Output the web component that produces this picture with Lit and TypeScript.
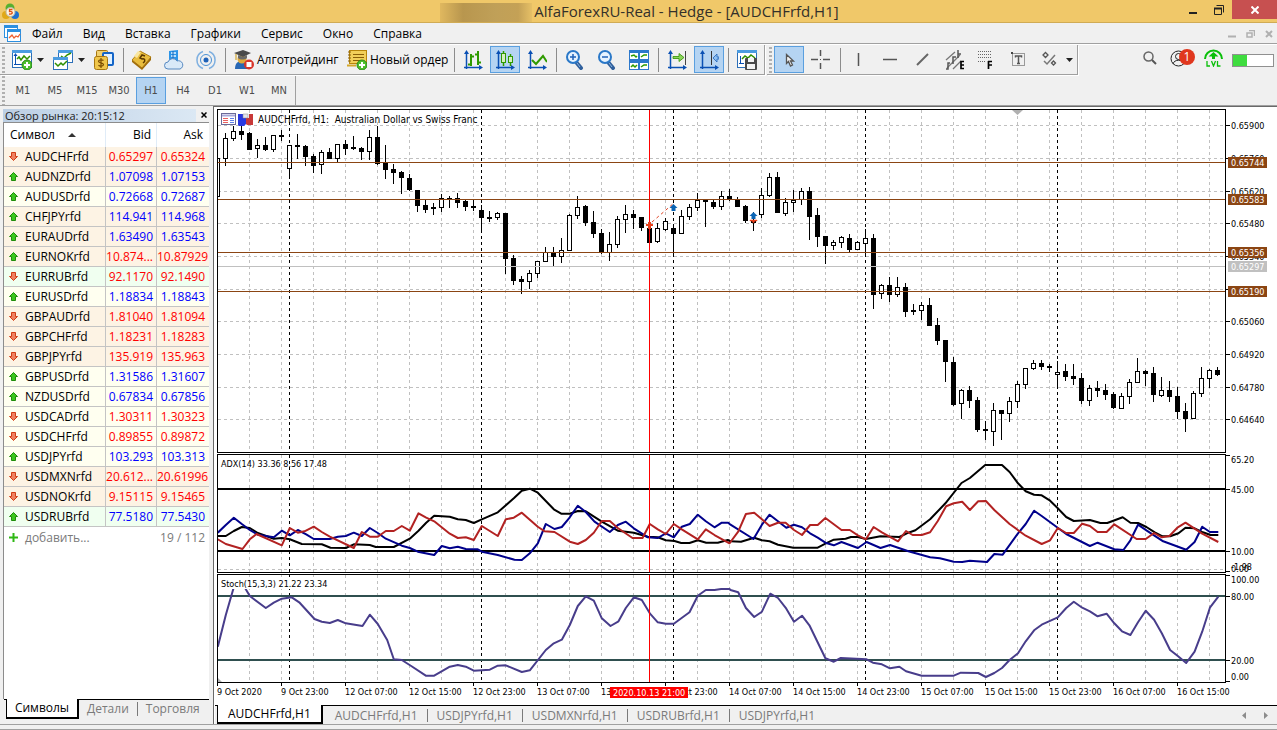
import { LitElement, html, svg, css } from "lit";
import { customElement, property } from "lit/decorators.js";
import { classMap } from "lit/directives/class-map.js";

type Candle = [number, number, number, number, number];

// Hourly candles: high, body top, body bottom, low, falling (1) or rising (0).
const CANDLES: Candle[] = [
  [158,158,196,196,0],[133,138,158,165,0],[126,131,138,140,0],[126,131,134,139,1],[132,133,149,149,1],
  [139,145,148,157,0],[137,145,149,150,1],[135,135,149,151,0],[130,135,136,140,1],[145,145,168,176,0],
  [134,145,146,158,1],[145,146,156,165,1],[154,156,165,172,1],[150,152,164,173,0],[148,152,158,158,1],
  [144,144,158,161,0],[140,144,148,154,1],[136,147,148,149,1],[147,148,151,159,1],[130,137,151,159,0],
  [126,137,163,164,1],[145,163,169,178,1],[164,169,172,183,1],[171,172,177,193,1],[174,178,189,190,1],
  [190,190,205,211,1],[200,205,209,212,1],[203,207,208,214,1],[194,198,207,211,0],[196,198,199,207,1],
  [193,198,202,207,1],[200,201,206,210,1],[199,206,207,210,1],[205,210,217,231,1],[211,217,218,221,1],
  [212,213,217,219,0],[213,213,258,273,1],[255,258,280,284,1],[276,279,281,293,1],[270,273,281,288,0],
  [261,261,273,277,0],[247,252,261,261,0],[247,252,256,266,1],[238,250,256,262,0],[214,215,250,250,0],
  [196,207,215,218,0],[205,206,222,225,1],[211,222,233,237,1],[229,233,252,253,1],[232,244,252,260,0],
  [216,219,244,247,0],[205,214,219,232,0],[210,214,217,228,1],[217,217,227,230,1],[226,228,242,242,1],
  [223,228,241,242,0],[218,221,229,230,0],[224,228,233,255,1],[210,216,233,233,0],[204,207,216,219,0],
  [193,200,207,210,0],[199,200,201,226,1],[200,202,206,208,1],[191,196,206,209,0],[189,196,199,200,1],
  [197,199,206,206,1],[205,206,220,222,1],[212,220,222,230,1],[188,195,214,217,0],[173,177,195,196,0],
  [172,177,212,212,1],[198,202,213,215,0],[190,200,202,211,0],[188,191,199,204,0],[187,191,216,239,1],
  [208,215,236,246,1],[236,236,245,263,1],[240,242,245,249,0],[236,237,242,247,0],[234,238,249,251,1],
  [241,242,249,249,0],[229,238,243,255,0],[234,238,294,308,1],[284,285,293,298,0],[277,285,294,301,1],
  [277,287,294,296,0],[283,287,311,316,1],[304,310,311,314,1],[302,305,310,319,0],[298,305,325,325,1],
  [318,325,340,344,1],[340,340,361,381,1],[357,362,404,405,1],[389,390,403,418,0],[386,390,400,407,1],
  [397,400,429,431,1],[421,429,430,439,1],[403,410,431,445,0],[410,410,413,439,1],[397,401,413,421,0],
  [381,384,401,407,0],[368,368,384,388,0],[360,363,368,369,0],[360,363,366,369,1],[364,366,367,371,1],
  [361,372,374,388,0],[364,371,376,380,1],[364,376,378,384,1],[373,378,400,403,1],[385,388,400,405,0],
  [381,388,390,396,1],[384,390,394,399,1],[392,394,407,408,1],[393,396,408,408,0],[379,382,396,403,0],
  [358,371,382,382,0],[370,371,373,385,1],[367,373,394,401,1],[377,390,395,396,0],[381,390,396,401,1],
  [387,396,411,418,1],[403,411,418,431,1],[391,393,418,418,0],[367,378,393,396,0],[369,370,378,387,0],
  [367,370,374,375,1],
];

// Indicator traces come in two halves; each half has its own origin and horizontal density.
const trace = (left: string, right: string): string => {
  const half = (s: string, origin: number, density: number) =>
    s.trim().split(/\s+/).map((p) => {
      const [x, y] = p.split(",").map(Number);
      return `${(origin + x / density).toFixed(1)},${(450 + y / 3).toFixed(1)}`;
    }).join(" ");
  return half(left, 214.5, 3) + " " + half(right, 730.5, 2.866);
};

const ADX = trace(
  "10,258 34,258 58,243 82,231 106,234 130,249 178,266 202,264 226,268 262,282 322,283 348,293 394,294 418,283 466,285 484,291 538,291 586,266 612,242 635,218 659,197 706,200 730,208 754,210 778,219 802,208 850,187 898,145 922,122 946,116 970,128 1018,178 1040,191 1066,191 1090,183 1114,184 1162,215 1210,242 1258,248 1300,260 1330,262 1354,271 1380,273 1400,279 1425,279 1450,271 1475,278 1510,278 1540,270",
  "0,274 30,275 68,263 90,271 112,274 136,284 180,293 250,293 272,281 296,269 330,266 345,261 365,261 388,267 430,259 484,261 510,248 530,241 572,208 616,160 662,99 686,84 730,45 778,45 800,66 824,100 846,124 870,134 892,136 916,152 938,175 962,201 984,213 1030,210 1060,219 1080,219 1124,202 1146,218 1168,219 1192,231 1216,247 1238,259 1260,259 1284,250 1304,233 1330,235 1354,247 1376,255 1398,255");
const DI_PLUS = trace(
  "10,248 34,225 58,203 82,222 106,240 130,254 178,262 202,242 226,256 250,240 275,253 298,267 346,267 370,260 394,258 418,248 442,258 466,234 490,249 514,266 562,287 586,294 610,305 659,315 682,288 706,295 730,290 754,297 790,298 802,305 850,315 900,329 922,330 946,310 970,280 994,222 1020,237 1042,231 1066,202 1090,167 1114,186 1140,215 1186,246 1210,225 1234,215 1258,235 1300,262 1330,264 1354,250 1378,262 1402,230 1426,222 1450,194 1474,214 1500,232 1522,218 1541,218",
  "0,224 66,267 90,224 112,194 160,233 182,224 205,232 228,250 250,263 272,278 296,286 318,276 365,294 390,276 430,294 457,285 510,304 572,322 600,325 640,335 664,336 686,332 735,336 756,312 780,314 824,250 846,222 870,182 892,198 962,252 1030,288 1052,278 1100,298 1126,300 1146,271 1168,224 1192,241 1240,274 1306,299 1330,276 1352,230 1374,246 1398,246");
const DI_MINUS = trace(
  "10,268 34,282 84,297 106,268 126,252 202,286 226,234 250,248 270,244 298,230 322,246 346,260 418,294 442,246 466,260 490,260 514,243 538,243 562,228 586,242 612,190 635,203 659,214 706,251 730,264 754,262 778,270 802,228 850,258 874,208 898,203 922,188 970,230 990,244 1020,246 1066,275 1090,282 1114,270 1138,248 1162,213 1186,213 1210,234 1254,264 1284,264 1306,222 1330,238 1354,252 1378,222 1402,238 1450,268 1474,238 1500,255 1545,280",
  "0,276 22,245 44,192 68,188 90,208 112,228 136,218 158,218 182,240 205,255 228,225 250,225 272,204 318,240 342,240 365,256 388,268 410,231 434,247 480,274 503,243 522,255 548,255 572,247 594,213 618,169 640,160 664,155 686,180 710,154 732,153 756,180 800,222 846,257 892,282 916,271 938,234 962,249 984,249 1008,221 1030,228 1052,246 1078,246 1100,223 1164,267 1190,267 1214,249 1236,262 1258,258 1282,232 1304,218 1352,251 1398,276");
const STOCH = trace(
  "10,590 34,495 58,412 66,390 84,402 92,415 106,438 154,474 178,458 202,446 232,442 254,457 300,507 322,515 346,519 370,510 394,520 444,528 466,494 490,522 518,570 538,628 562,630 590,648 634,677 659,677 706,650 730,645 754,650 778,662 826,659 850,647 874,646 922,666 946,661 994,600 1018,580 1042,569 1066,525 1090,468 1114,439 1138,452 1162,505 1188,528 1212,514 1234,474 1258,442 1282,450 1306,490 1330,517 1354,521 1378,521 1425,487 1450,437 1474,420 1500,420 1520,417 1545,417",
  "0,420 22,427 44,474 68,501 90,485 114,431 136,444 160,476 182,515 205,497 226,526 272,625 296,635 316,624 390,628 408,638 434,643 457,655 484,650 503,664 548,677 640,677 660,668 710,669 732,681 756,669 778,654 800,630 824,610 846,574 870,541 892,524 938,502 962,474 984,455 1008,473 1030,484 1052,499 1078,491 1100,520 1122,544 1146,555 1168,517 1190,482 1214,509 1236,550 1260,600 1282,618 1306,639 1330,605 1352,545 1374,473 1398,440");

const ROWS: [string, string, string, string, string, string][] = [
  ["AUDCHFrfd", "0.65297", "0.65324", "down", "red", "peach"],
  ["AUDNZDrfd", "1.07098", "1.07153", "up", "blue", "peach"],
  ["AUDUSDrfd", "0.72668", "0.72687", "up", "blue", "ivory"],
  ["CHFJPYrfd", "114.941", "114.968", "up", "blue", "peach"],
  ["EURAUDrfd", "1.63490", "1.63543", "up", "blue", "peach"],
  ["EURNOKrfd", "10.874...", "10.87929", "up", "red", "peach"],
  ["EURRUBrfd", "92.1170", "92.1490", "down", "red", "mint"],
  ["EURUSDrfd", "1.18834", "1.18843", "up", "blue", "ivory"],
  ["GBPAUDrfd", "1.81040", "1.81094", "down", "red", "peach"],
  ["GBPCHFrfd", "1.18231", "1.18283", "down", "red", "peach"],
  ["GBPJPYrfd", "135.919", "135.963", "down", "red", "peach"],
  ["GBPUSDrfd", "1.31586", "1.31607", "up", "blue", "ivory"],
  ["NZDUSDrfd", "0.67834", "0.67856", "up", "blue", "ivory"],
  ["USDCADrfd", "1.30311", "1.30323", "down", "red", "ivory"],
  ["USDCHFrfd", "0.89855", "0.89872", "down", "red", "ivory"],
  ["USDJPYrfd", "103.293", "103.313", "up", "blue", "ivory"],
  ["USDMXNrfd", "20.612...", "20.61996", "down", "red", "peach"],
  ["USDNOKrfd", "9.15115", "9.15465", "down", "red", "peach"],
  ["USDRUBrfd", "77.5180", "77.5430", "up", "blue", "mint"],
];

const axes = svg`<path d="M3.5 2v17M1 17.5h17" stroke="#0a50b4" stroke-width="1.5" fill="none"/><path d="M3.5 0l2.500 4h-5zM20 17.500l-4 2.500v-5z" fill="#0a50b4"/>`;
const miniWindow = (x: number, y: number, w: number, h: number) => svg`
  <rect x=${x + 0.5} y=${y + 0.5} width=${w - 1} height=${h - 1} fill="#fff" stroke="#2c6fb8"/>
  <rect x=${x} y=${y} width=${w} height="3" fill="#4a9be0"/>`;
const plusDisc = svg`<circle cx="15" cy="15" r="5" fill="#4cbf2c" stroke="#2b8a17"/><path d="M15 12v6M12 15h6" stroke="#fff" stroke-width="2"/>`;
const lens = svg`<path d="M11 12l5 6" stroke="#2f5f9c" stroke-width="4" stroke-linecap="round"/><path d="M12 13l3 4" stroke="#8ab4e0" stroke-width="1"/><circle cx="8" cy="7" r="6" fill="#e6f3ff" stroke="#2a78c8" stroke-width="2"/>`;

const ICONS: Record<string, unknown> = {
  newChart: svg`${miniWindow(0, 0, 20, 18)}<path d="M3.5 15V5M2 14.5h12" stroke="#0a50b4"/><path d="M5 9l2-2 2 3 3-4 3 3 3-3" stroke="#2f8f00" fill="none" stroke-width="1.5"/><path d="M3.5 3l2 3h-4z" fill="#0a50b4"/>${plusDisc}`,
  windows: svg`${miniWindow(5, 0, 15, 13)}<path d="M8 6l3 2 3-3 4-2" stroke="#2f8f00" fill="none" stroke-width="1.5"/>${miniWindow(0, 7, 15, 13)}<path d="M2 13l3 3 3-3 2 2 4-4" stroke="#2f8f00" fill="none" stroke-width="1.5"/>`,
  money: svg`<rect x="2.5" y=".5" width="11" height="10" rx="1" fill="#f0d070" stroke="#a87710"/><rect x="9" y="3" width="10" height="12" rx="1" fill="#dff0ff" stroke="#1465c8" stroke-width="2"/><rect x=".5" y="6.5" width="13" height="13" rx="2" fill="#f0c64a" stroke="#a87710"/><path d="M9.500 10.500c-1-1-5-1-5 .8s5 1.200 5 3.200-4 2-5 .6M7 8v10" stroke="#7a4c00" stroke-width="1.200" fill="none"/>`,
  gold: svg`<path d="M8 1l11 6-9 11L0 10z" fill="#e9bd3e" stroke="#b07f14"/><path d="M0 10l10 8v2L0 12zM19 7v3l-9 10v-2z" fill="#a06c08"/><path d="M2 6l4-5 3 1-4 6z" fill="#f9e6a0"/><path d="M13 6l-3-1-2 3 2 1c3-1 4 2 1 4" stroke="#5a3800" stroke-width="1.500" fill="none"/>`,
  cloud: svg`<path d="M5 1l9-1v12H5z" fill="#2d95e8"/><path d="M7 3h5M7 6h5" stroke="#e6f6ff" stroke-width="1.500"/><path d="M9 1v10" stroke="#1465b8"/><path d="M4 19a3.500 3.500 0 0 1 0-7 5 5 0 0 1 9-1 4 4 0 0 1 3 8z" fill="#d9e9f8" stroke="#5688c0"/>`,
  signal: svg`<g fill="none" stroke="#4a90d4"><circle cx="10" cy="10" r="5.500"/><path d="M7 1.500a9 9 0 0 0 0 17M13 1.500a9 9 0 0 1 0 17" stroke="#7fb0e0" stroke-width="1.500"/></g><circle cx="10" cy="10" r="2.500" fill="#1f62b8"/>`,
  algo: svg`<path d="M1 19c0-6 3-8 7-8s7 3 7 8z" fill="#2a68b4"/><circle cx="8" cy="9" r="4.500" fill="#e0a93a"/><path d="M0 3l9-3 8 3-8 4z" fill="#4a4a4a"/><path d="M4 5v3c2 2 7 2 9 0V5L9 7z" fill="#6a6a6a"/><path d="M2 4v6" stroke="#c8960a"/><circle cx="15" cy="14.500" r="5" fill="#d8352a"/><rect x="12.500" y="12" width="5" height="5" fill="#fff"/>`,
  order: svg`<rect x="2.500" y=".5" width="17" height="13" fill="#f2cf5a" stroke="#b8860b"/><path d="M6 4.500h11M6 7.500h11M6 10.500h7" stroke="#8a5f08"/><path d="M1 2h3M1 5h3M1 8h3M1 11h3" stroke="#8a5f08"/><path d="M0 15.500h9" stroke="#d5a82c" stroke-width="2"/>${plusDisc}`,
  bars: svg`${axes}<path d="M8 4v12M5 14.500h3M8 6.500h3M15 1v14M12 4.500h3M15 12.500h3" stroke="#2f9a00" stroke-width="2" fill="none"/>`,
  candles: svg`${axes}<path d="M8.500 1v3M8.500 13v3M15.500 4v2M15.500 13v3" stroke="#2f9a00" stroke-width="1.500"/><rect x="6.500" y="3.500" width="4" height="9" fill="#d6efc0" stroke="#2f9a00"/><rect x="13.500" y="6.500" width="4" height="6" fill="#d6efc0" stroke="#2f9a00"/>`,
  line: svg`${axes}<path d="M5 10l4 4 7-8 4 6" stroke="#2f9a00" stroke-width="2" fill="none"/>`,
  zoomIn: svg`${lens}<path d="M5 7h6M8 4v6" stroke="#1f62b8" stroke-width="1.500"/>`,
  zoomOut: svg`${lens}<path d="M5 7h6" stroke="#1f62b8" stroke-width="1.500"/>`,
  tiles: svg`<rect width="20" height="20" fill="#2c78cc"/><path d="M1 3h8v6H1zM11 3h8v6h-8zM1 13h8v6H1zM11 13h8v6h-8z" fill="#fff"/><path d="M2 6l3-1 2 2 1-1M12 7l3-2h3M2 17l2-2 2 2 2-2M12 17l3-2h3" stroke="#2f9a00" stroke-width="1.500" fill="none"/>`,
  scroll: svg`${axes}<path d="M18.500 1v14" stroke="#444"/><path d="M6 6.500h6V3.500L17 7.500 12 11.500V8.500H6z" fill="#8cd65c" stroke="#2f8f00" stroke-width=".8"/>`,
  shift: svg`${axes}<path d="M12.500 1v14" stroke="#333"/><path d="M20 7h-2V4l-4 4 4 4V9h2z" fill="#8cc0f4" stroke="#1f62b8" stroke-width=".8"/>`,
  template: svg`${miniWindow(0, 0, 20, 18)}<path d="M3.500 14V6M2 13.500h5" stroke="#0a50b4"/><path d="M5 9l3-3 3 2 3-3 4 3" stroke="#2f8f00" fill="none" stroke-width="1.500"/><rect x="8" y="8" width="12" height="12" rx="1" fill="#4a4a4a"/><path d="M11 8h6v4h-6zM10 14h8v5h-8z" fill="#f4f4f4"/>`,
  cursor: svg`<path d="M7.500 4.500v9l2-2 2 4.500 2-1-2-4h3z" fill="#f4f4f4" stroke="#555" stroke-width="1.300"/>`,
  cross: svg`<path d="M0 9.500h7M12 9.500h7M9.500 0v6M9.500 13v6" stroke="#555" stroke-width="1.500"/><path d="M9 9.500h1" stroke="#555"/>`,
  vline: svg`<path d="M9.500 3v13" stroke="#555" stroke-width="1.500"/>`,
  hline: svg`<path d="M2 9.500h14" stroke="#555" stroke-width="1.500"/>`,
  trend: svg`<path d="M4 15L15 4" stroke="#666" stroke-width="2"/>`,
  channel: svg`<path d="M1 10L10 2M2 18l13-13M8 19l8-8" stroke="#777" stroke-width="1.300"/><path d="M1 19h2v-6h2M8 14V7h3M13 8V0M13 4h3" stroke="#555" fill="none" stroke-width="1.500"/><path d="M19 11.500h-3v7h3M16 15h3" stroke="#000" stroke-width="1.700" fill="none"/>`,
  fibo: svg`<path d="M1 1.500h14M1 4.500h14M1 7.500h14M1 11.500h7" stroke="#666" stroke-dasharray="1 1"/><path d="M15 11.500h-4M11.500 11v8M12 15h3" stroke="#000" stroke-width="1.700" fill="none"/>`,
  text: svg`<rect x="3.500" y="3.500" width="12" height="12" fill="none" stroke="#444" stroke-dasharray="1 1"/><path d="M2 2h2v2H2z" fill="#444"/><path d="M6.500 7.500V6h6v1.500M9.500 6v8M8 13.500h3" stroke="#555" stroke-width="1.500" fill="none"/>`,
  shapes: svg`<path d="M4.500 2.500L7 5 4.500 7.500 2 5zM12.500 11l2 2-2 2-2-2z" fill="#eee" stroke="#555" stroke-width="1.300"/><path d="M3 11l3 3 8-9" stroke="#777" stroke-width="1.500" fill="none"/>`,
};

const icon = (name: string) => html`<svg class="icon" width="20" height="20" viewBox="0 0 20 20" aria-hidden="true">${ICONS[name]}</svg>`;
const caret = html`<svg width="7" height="4" viewBox="0 0 7 4" aria-hidden="true"><path d="M0 0h7L3.500 4z" fill="#222"/></svg>`;

@customElement("tool-bar")
class ToolBar extends LitElement {
  @property({ attribute: false }) items: string[] = [];
  static styles = css`
    :host { display: flex; align-items: stretch; height: 29px; padding-right: 2px; border-bottom: 1px solid #a0a0a0; border-right: 1px solid #a0a0a0; box-shadow: 1px 1px 0 #fff; }
    .grip { width: 3px; margin: 2px 2px 0 2px; background: repeating-linear-gradient(#b0b0b0 0 2px, #f0f0f0 2px 4px); }
    .sep { width: 8px; height: 24px; align-self: center; background: linear-gradient(90deg, transparent 4px, #8c8c8c 4px, #8c8c8c 5px, transparent 5px); }
    button { box-sizing: border-box; width: 30px; height: 27px; margin: 1px 0 0; padding: 0 0 0 4px; border: 1px solid transparent; background: none; display: flex; align-items: center; gap: 3px; font: 12px "Open Sans", "Noto Sans", sans-serif; color: #000; white-space: nowrap; }
    button + button { margin-left: 2px; }
    .drop { width: 39px; gap: 5px; }
    .wide { width: 111px; }
    .order { width: 108px; }
    .on { background: #b5d4f2; border-color: #5a9fdf; }
    .icon { flex: none; }
  `;
  render() {
    return html`<span class="grip"></span>${this.items.map((it) => {
      if (it === "|") return html`<span class="sep"></span>`;
      const [name, kind = "", label = ""] = it.split(":");
      return html`<button aria-label=${label || name} class=${classMap({ drop: kind === "drop", wide: name === "algo", order: name === "order", on: kind === "on" })}>${icon(name)}${kind === "drop" ? caret : ""}${label}</button>`;
    })}`;
  }
}

@customElement("market-watch")
class MarketWatch extends LitElement {
  static styles = css`
    :host { display: flex; flex-direction: column; min-height: 0; padding: 2px 4px 0 3px; font: 12px "Open Sans", "Noto Sans", sans-serif; }
    header { display: flex; height: 14px; align-items: center; font-size: 11px; color: #1a1a1a; }
    .name { flex: 1; padding-left: 2px; line-height: 13px; background: linear-gradient(90deg, #bccfe4, #dbe8f4); }
    .close { width: 13px; height: 14px; padding: 0 0 0 2px; border: 0; background: none; display: grid; place-items: center; }
    .body { flex: 1; display: flex; flex-direction: column; background: #fff; border-left: 1px solid #8c8c8c; border-top: 1px solid #8c8c8c; }
    table { width: 100%; border-collapse: separate; border-spacing: 0; table-layout: fixed; }
    th { height: 24px; padding: 0 5px 0 6px; font-weight: 400; text-align: right; border-right: 1px solid #e0ecf8; line-height: 22px; }
    th:first-child { text-align: left; width: 90px; }
    th:nth-child(2) { width: 39px; }
    th svg { margin: 0 0 2px 13px; }
    td { height: 19px; line-height: 19px; padding: 0 3px 0 0; text-align: right; border-right: 1px solid #c4c4c4; border-bottom: 1px solid #c4c4c4; white-space: nowrap; }
    td:first-child { text-align: left; padding-left: 5px; }
    td:last-child, th:last-child { border-right: 0; padding-right: 4px; }
    th:last-child { padding-right: 6px; }
    td svg { width: 9px; height: 9px; margin: 0 7px 0 0; vertical-align: 0; }
    .peach { background: #fdf3e4; } .ivory { background: #fffff0; } .mint { background: #f0fff0; }
    .red { color: #f00; } .blue { color: #00f; }
    .add { display: flex; align-items: center; height: 20px; padding: 0 4px 0 5px; color: #7a7a7a; }
    .add span { flex: 1; padding-left: 7px; }
    nav { display: flex; height: 25px; margin-left: 1px; color: #7a7a7a; box-shadow: inset 0 1px 0 #000; align-items: flex-start; }
    nav button { flex: none; font: inherit; color: inherit; border: 0; background: none; padding: 0 8px; margin: 3px 0 0; line-height: 14px; white-space: nowrap; }
    nav .sel { box-sizing: border-box; height: 20px; margin: 0 0 0 2px; border: 1px solid #000; border-width: 0 2px 2px 1px; background: #fff; color: #000; width: 73px; padding: 0; }
    nav .last { border-left: 1px solid #7a7a7a; }
  `;
  render() {
    return html`
      <header><span class="name">Обзор рынка: 20:15:12</span>
        <button class="close" aria-label="Закрыть"><svg width="6" height="6" viewBox="0 0 6 6"><path d="M.5.500l5 5M5.500.500l-5 5" stroke="#000" stroke-width="1.500"/></svg></button></header>
      <div class="body">
        <table>
          <thead><tr><th>Символ<svg width="8" height="4" viewBox="0 0 8 4"><path d="M0 4h8L4 0z" fill="#333"/></svg></th><th>Bid</th><th>Ask</th></tr></thead>
          <tbody>${ROWS.map(([s, bid, ask, dir, color, bg]) => html`<tr class=${bg}>
            <td><svg viewBox="0 0 9 9">${dir === "up"
              ? svg`<path d="M4.500.500l4 4h-2v4h-4v-4h-2z" fill="#3cc81e" stroke="#1e8c0a"/>`
              : svg`<path d="M4.500 8.500l4-4h-2v-4h-4v4h-2z" fill="#f08060" stroke="#d03c14"/>`}</svg>${s}</td>
            <td class=${color}>${bid}</td><td class=${color}>${ask}</td></tr>`)}</tbody>
        </table>
        <div class="add"><svg width="9" height="9" viewBox="0 0 9 9"><path d="M4.500 0v9M0 4.500h9" stroke="#2fb814" stroke-width="2"/></svg><span>добавить...</span>19 / 112</div>
      </div>
      <nav><button class="sel">Символы</button><button>Детали</button><button class="last">Торговля</button></nav>`;
  }
}

const priceGrid = [125, 158, 191, 223, 256, 289, 321, 354, 387, 419];
const priceText = ["0.65900", "0.65760", "0.65620", "0.65480", "0.65340", "0.65200", "0.65060", "0.64920", "0.64780", "0.64640"];
const marks: [number, string, string][] = [[162, "0.65744", "brown"], [199, "0.65583", "brown"], [252, "0.65356", "brown"], [266, "0.65297", "silver"], [291, "0.65190", "brown"]];
const times = ["9 Oct 2020", "9 Oct 23:00", "12 Oct 07:00", "12 Oct 15:00", "12 Oct 23:00", "13 Oct 07:00", "13 Oct 15:00", "13 Oct 23:00", "14 Oct 07:00", "14 Oct 15:00", "14 Oct 23:00", "15 Oct 07:00", "15 Oct 15:00", "15 Oct 23:00", "16 Oct 07:00", "16 Oct 15:00"];

@customElement("price-chart")
class PriceChart extends LitElement {
  static styles = css`
    :host { display: grid; grid-template-columns: minmax(0, 1fr) 51px; row-gap: 1px; background: #fff; padding: 2px 0 0 2px; font: 9px "DejaVu Sans Condensed", "DejaVu Sans", sans-serif; }
    .plot { box-sizing: border-box; width: 100%; border: 1px solid #000; display: block; overflow: hidden; }
    .scale, .axis { display: block; width: 100%; overflow: visible; }
    .price { height: 344px; } .adx { height: 119px; } .stoch { height: 109px; }
    .axis { grid-column: 1 / -1; height: 21px; margin-top: -1px; }
    .caption { font-size: 10px; }
    .grid { stroke: #c0c0c0; stroke-dasharray: 3 3; }
    .day { stroke: #000; stroke-dasharray: 3 3; }
    .brown { stroke: #8b4513; } .silver { stroke: #c0c0c0; }
    rect.brown { fill: #8b4513; stroke: none; } rect.silver { fill: #c0c0c0; stroke: none; }
    .cursor { stroke: #f00; }
    .w { fill: #fff; }
    .trace { fill: none; stroke-width: 2; stroke-linejoin: round; }
  `;
  private columns(top: number, bottom: number) {
    const out = [];
    for (let x = 249; x < 1225; x += 32) out.push(svg`<line class="grid" x1=${x + 0.5} x2=${x + 0.5} y1=${top} y2=${bottom}/>`);
    for (let x = 289; x < 1225; x += 192) out.push(svg`<line class="day" x1=${x + 0.5} x2=${x + 0.5} y1=${top} y2=${bottom}/>`);
    return out;
  }
  private row(y: number, cls: string) {
    return svg`<line class=${cls} x1="218" x2="4000" y1=${y + 0.5} y2=${y + 0.5}/>`;
  }
  private level(y: number, color: string) {
    return svg`<rect x="218" y=${y - 1} width="4000" height="2" fill=${color}/>`;
  }
  private tick(y: number, label: string) {
    return svg`<line x1="1226" x2="1230" y1=${y + 0.5} y2=${y + 0.5} stroke="#000"/><text x="1231" y=${y + 4}>${label}</text>`;
  }
  render() {
    return html`
      <svg class="plot price" role="img" aria-label="AUDCHFrfd, H1"><g transform="translate(-218 -110)">
        ${this.columns(110, 452)}
        ${priceGrid.map((y) => this.row(y, "grid"))}
        ${CANDLES.map(([h, t, b, l, down], i) => {
          const x = 217 + i * 8;
          return svg`<line x1=${x + 0.5} x2=${x + 0.5} y1=${h} y2=${l + 1} stroke="#000"/>
            <rect x=${x - 1.5} y=${t + 0.5} width="4" height=${b - t} fill=${down ? "#000" : "#fff"} stroke="#000"/>`;
        })}
        ${marks.map(([y, , c]) => this.row(y, c))}
        <path d="M652 222l22-19" stroke="#e04020" stroke-dasharray="3 3"/>
        <line class="cursor" x1="649.5" x2="649.5" y1="110" y2="452"/>
        <path d="M648 222h3v2h2v2h-2v3h-3v-3h-2v-2h2z" fill="#e8401c"/>
        <path d="M673.500 204l4 4h-2v3h-4v-3h-2zM753.500 212l4 4h-2v3h-4v-3h-2z" fill="#0a64b4"/>
        <path d="M750 220h7v1h-2l-1.500 2-1.500-2h-2z" fill="#e8401c" stroke="#e8401c" stroke-width=".5"/>
        <path d="M1012 110h11l-5.500 5z" fill="#b0b0b0"/>
        <rect x="221.500" y="113.500" width="14" height="11" fill="#fff" stroke="#6a6a98"/><path d="M222 115.500h13" stroke="#a8a8d8" stroke-width="2"/>
        <path d="M223 118.500h5M223 120.500h5M223 122.500h5" stroke="#e86060"/><path d="M230 118.500h4M230 120.500h4M230 122.500h4" stroke="#6080e8"/>
        <path d="M238 114h5v4h3v6l-2 2h-5l-1-1z" fill="#2838e0"/><path d="M253 114h-4v4h-3v6l1 1h6z" fill="#c83838"/><path d="M243 114h5v4h-5z" fill="#e4e4ec" stroke="#888" stroke-width=".5"/>
        <text class="caption" x="258" y="123" xml:space="preserve">AUDCHFrfd, H1:&#160; Australian Dollar vs Swiss Franc</text>
      </g></svg>
      <svg class="scale price"><g transform="translate(-1226 -109)">
        ${priceGrid.map((y, i) => this.tick(y, priceText[i]))}
        ${marks.map(([y, label, c]) => svg`<rect class=${c} x="1228" y=${y - 5} width="39" height="11"/><text class="w" x="1231" y=${y + 4}>${label}</text>`)}
      </g></svg>
      <svg class="plot adx" role="img" aria-label="ADX"><g transform="translate(-218 -455)">
        ${this.columns(455, 572)}
        ${this.row(569, "grid")}
        ${this.level(489, "#000")}${this.level(551, "#000")}
        <polyline class="trace" points=${ADX} stroke="#000"/>
        <polyline class="trace" points=${DI_PLUS} stroke="#00008b"/>
        <polyline class="trace" points=${DI_MINUS} stroke="#b22222"/>
        <line class="cursor" x1="649.5" x2="649.5" y1="455" y2="572"/>
        <text x="221" y="467">ADX(14) 33.36 8.56 17.48</text>
      </g></svg>
      <svg class="scale adx"><g transform="translate(-1226 -454)">
        <path d="M1226 455.500h4M1226 571.500h4" stroke="#000"/><text x="1231" y="463">65.20</text>
        ${this.tick(489, "45.00")}${this.tick(551, "10.00")}
        <text x="1231" y="572">0.00</text><text x="1231" y="570">-1.98</text>
      </g></svg>
      <svg class="plot stoch" role="img" aria-label="Stochastic"><g transform="translate(-218 -575)">
        ${this.columns(575, 682)}
        ${this.level(596, "#2f4f4f")}${this.level(660, "#2f4f4f")}
        <polyline class="trace" points=${STOCH} stroke="#483d8b"/>
        <line class="cursor" x1="649.5" x2="649.5" y1="575" y2="682"/>
        <path d="M218 678l4 4h-4z" fill="#b0b0b0"/>
        <rect x="221" y="577" width="107" height="12" fill="#fff"/>
        <text x="221" y="587">Stoch(15,3,3) 21.22 23.34</text>
      </g></svg>
      <svg class="scale stoch"><g transform="translate(-1226 -574)">
        <path d="M1226 575.500h4M1226 681.500h4" stroke="#000"/><text x="1231" y="583">100.00</text>
        ${this.tick(596, "80.00")}${this.tick(660, "20.00")}<text x="1231" y="680">0.00</text>
      </g></svg>
      <svg class="axis"><g transform="translate(-217 -683)">
        ${times.map((t, i) => svg`<line x1=${217.5 + i * 64} x2=${217.5 + i * 64} y1="683" y2="686" stroke="#000"/><text x=${217 + i * 64} y="695">${t}</text>`)}
        <rect x="610" y="687" width="78" height="11" fill="#f00"/><text class="w" x="613" y="696">2020.10.13 21:00</text>
      </g></svg>`;
  }
}

@customElement("app-root")
class AppRoot extends LitElement {
  static styles = css`
    :host { display: flex; flex-direction: column; box-sizing: border-box; min-height: 100vh; background: #f0f0f0; font: 12px "Open Sans", "Noto Sans", sans-serif; color: #000; overflow: hidden; }
    button { font: inherit; border: 0; background: none; padding: 0; margin: 0; color: inherit; white-space: nowrap; }
    .title { display: flex; height: 22px; background: #f0c869; border-bottom: 1px solid #d0ab55; align-items: center; }
    .title h1 { flex: 1; margin: 0; padding-left: 80px; display: flex; justify-content: center; align-items: center; font: 15px/22px "Open Sans", "Noto Sans", sans-serif; color: #33302a; }
    .logo { margin-left: 2px; }
    .redacted { width: 92px; height: 19px; margin: 3px 2px 0 0; background: linear-gradient(90deg, #e0b85f, #b8964e 25%, #c0a058 60%, #c4a156 85%, #e6c066); }
    .win { display: flex; align-self: flex-start; height: 19px; }
    .win button { width: 26px; display: grid; place-items: center; }
    .win .x { width: 45px; background: #c75050; }
    .menu { display: flex; height: 20px; align-items: center; padding-left: 4px; border-bottom: 1px solid #a0a0a0; box-shadow: 0 1px 0 #fff; }
    .doc { margin-right: 1px; }
    .menu button { padding: 0 10px; }
    .menu .mdi { margin-left: auto; display: flex; gap: 10px; padding-right: 4px; color: #b0b0b0; }
    .menu .mdi button { padding: 0; }
    .tools { display: flex; margin-top: 1px; gap: 2px; }
    .status { margin-left: auto; display: flex; align-items: center; gap: 9px; padding-right: 3px; }
    .status .find { margin-right: 4px; }
    .user { position: relative; }
    .badge { position: absolute; left: 9px; top: -1px; width: 16px; height: 16px; border-radius: 8px; background: #e0371e; color: #fff; text-align: center; line-height: 16px; }
    .power { box-sizing: border-box; width: 42px; height: 13px; border: 1px solid #909090; background: linear-gradient(90deg, #3fdc3f 14px, #fff 14px); }
    .frames { display: flex; align-self: flex-start; height: 29px; margin-top: 1px; padding: 0 1px 0 2px; border-right: 1px solid #a0a0a0; gap: 2px; align-items: flex-start; font: 11px "DejaVu Sans Condensed", sans-serif; color: #4c4c4c; }
    .frames .grip { width: 3px; margin-right: 1px; align-self: stretch; background: repeating-linear-gradient(#b0b0b0 0 2px, #f0f0f0 2px 4px); }
    .frames button { width: 30px; height: 27px; margin-top: 1px; box-sizing: border-box; }
    .frames .on { background: #b5d4f2; border: 1px solid #5a9fdf; }
    .main { flex: 1; display: grid; grid-template-columns: 213px minmax(0, 1fr); min-height: 0; border-top: 1px solid #a0a0a0; }
    .work { display: flex; flex-direction: column; min-width: 0; border-top: 1px solid #696969; border-left: 1px solid #696969; background: #fff; padding-left: 1px; }
    .work price-chart { flex: none; }
    .tabs { display: flex; height: 19px; margin-top: 1px; padding-left: 2px; background: #f0f0f0; box-shadow: inset 0 1px 0 #000; color: #7a7a7a; align-items: flex-start; }
    .tabs button { padding: 0 9px; line-height: 13px; border-left: 1px solid #7a7a7a; margin: 4px 0 0; }
    .tabs .sel { margin: 0 2px 0 0; height: 19px; line-height: 18px; padding: 0 10px; background: #fff; color: #000; border: solid #000; border-width: 0 2px 2px 1px; box-sizing: border-box; }
    .tabs .sel + button { border-left-color: transparent; }
    .nav { margin: 7px 9px 0 auto; }
    .foot { height: 6px; border-bottom: 1px solid #a0a0a0; border-top: 1px solid #a0a0a0; box-sizing: border-box; }
  `;
  render() {
    return html`
      <div class="title">
        <svg class="logo" width="17" height="17" viewBox="0 0 17 17" aria-hidden="true"><circle cx="8" cy="5" r="4.500" fill="#58b030"/><circle cx="4" cy="12" r="4" fill="#e0a818"/><circle cx="13" cy="12" r="4" fill="#1f70d0"/><circle cx="8.500" cy="9" r="4.500" fill="#fff4e0" stroke="#b8b8a8"/><path d="M10.500 6.500H7.500v2c4-.5 3.500 3.500-.5 2.500" stroke="#e05010" stroke-width="1.300" fill="none"/></svg>
        <h1><span class="redacted"></span>AlfaForexRU-Real - Hedge - [AUDCHFrfd,H1]</h1>
        <div class="win">
          <button aria-label="Свернуть"><svg width="8" height="10"><path d="M0 8h8" stroke="#222" stroke-width="2"/></svg></button>
          <button aria-label="Восстановить"><svg width="10" height="10"><path d="M.5 3.500h7v6h-7zM2.500.500h7v7" fill="none" stroke="#222"/><path d="M0 3.500h8" stroke="#222" stroke-width="2"/></svg></button>
          <button class="x" aria-label="Закрыть"><svg width="8" height="8"><path d="M.5.500l7 7M7.500.500l-7 7" stroke="#fff" stroke-width="2"/></svg></button>
        </div>
      </div>
      <div class="menu">
        <svg class="doc" width="17" height="17" viewBox="0 0 17 17" aria-hidden="true"><rect x=".5" y=".5" width="13" height="12" fill="#fff" stroke="#2c8fe0"/><path d="M0 1.500h14" stroke="#2c8fe0" stroke-width="3"/><rect x="3.500" y="4.500" width="13" height="12" fill="#fff" stroke="#2c8fe0"/><path d="M3 5.500h14" stroke="#2c8fe0" stroke-width="3"/><path d="M5 13l3-3 2 3 2-2 2 1 2-3" stroke="#f06030" fill="none" stroke-width="1.300"/></svg>
        ${["Файл", "Вид", "Вставка", "Графики", "Сервис", "Окно", "Справка"].map((m) => html`<button>${m}</button>`)}
        <div class="mdi">
          <button aria-label="Свернуть окно"><svg width="8" height="8"><path d="M0 6.500h8" stroke="currentColor" stroke-width="2"/></svg></button>
          <button aria-label="Восстановить окно"><svg width="9" height="8"><path d="M1 3h5v4H1zM3 .5h5.500V6" fill="none" stroke="currentColor" stroke-width="1.500"/></svg></button>
          <button aria-label="Закрыть окно"><svg width="8" height="8"><path d="M1 1l6 6M7 1L1 7" stroke="currentColor" stroke-width="2"/></svg></button>
        </div>
      </div>
      <div class="tools">
        <tool-bar .items=${["newChart:drop", "windows:drop", "money", "|", "gold", "cloud", "signal", "|", "algo::Алготрейдинг", "order::Новый ордер", "|", "bars", "candles:on", "line", "|", "zoomIn", "zoomOut", "tiles", "|", "scroll", "shift:on", "|", "template"]}></tool-bar>
        <tool-bar .items=${["cursor:on", "cross", "|", "vline", "hline", "trend", "channel", "fibo", "text", "shapes:drop"]}></tool-bar>
        <div class="status">
          <button class="find" aria-label="Поиск"><svg width="14" height="14"><circle cx="5.500" cy="5.500" r="4.500" fill="none" stroke="#666" stroke-width="1.500"/><path d="M9 9l4 4" stroke="#555" stroke-width="2"/></svg></button>
          <button class="user" aria-label="Уведомления"><svg width="25" height="17"><circle cx="8.500" cy="8.500" r="7.500" fill="none" stroke="#222"/><circle cx="8.500" cy="6.500" r="3" fill="none" stroke="#222"/><path d="M3 14c1-5 10-5 11 0" fill="none" stroke="#222"/></svg><span class="badge">1</span></button>
          <button aria-label="LVL"><svg width="19" height="18"><path d="M1 10a8.500 8.500 0 0 1 17 0" fill="none" stroke="#0abf0a" stroke-width="2"/><path d="M9.500 3l5 4.500H11V10H8V7.500H4.500z" fill="#0abf0a"/><path d="M3 12v5h3M7.500 12l2 5 2-5M13.500 12v5h3" fill="none" stroke="#0abf0a" stroke-width="1.300"/></svg></button>
          <div class="power"></div>
        </div>
      </div>
      <div class="frames"><span class="grip"></span>${["M1", "M5", "M15", "M30", "H1", "H4", "D1", "W1", "MN"].map((f) => html`<button class=${classMap({ on: f === "H1" })}>${f}</button>`)}</div>
      <div class="main">
        <market-watch></market-watch>
        <div class="work">
          <price-chart></price-chart>
          <div class="tabs">
            <button class="sel">AUDCHFrfd,H1</button>
            ${["AUDCHFrfd,H1", "USDJPYrfd,H1", "USDMXNrfd,H1", "USDRUBrfd,H1", "USDJPYrfd,H1"].map((t) => html`<button>${t}</button>`)}
            <svg class="nav" width="26" height="7" aria-hidden="true"><path d="M4 0v7L0 3.500zM22 0v7l4-3.500z" fill="#8c8c8c"/></svg>
          </div>
        </div>
      </div>
      <div class="foot"></div>`;
  }
}
